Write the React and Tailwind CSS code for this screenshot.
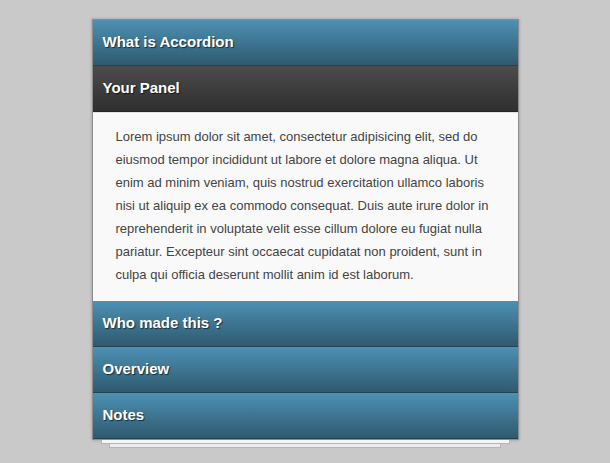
import React from "react";

function Header({ children, dark }) {
  return (
    <div
      className={
        "flex h-[46px] items-center px-[10px] text-[15px] font-bold text-white [text-shadow:1px_1px_1px_rgba(0,0,0,0.6)] border-b " +
        (dark
          ? "bg-gradient-to-b from-[#4c4c4c] to-[#2f2f2f] border-[#252525]"
          : "bg-gradient-to-b from-[#4d91b4] to-[#2f5a6f] border-[#234254]")
      }
    >
      {children}
    </div>
  );
}

export default function App() {
  return (
    <div className="min-h-[463px] bg-[#c9c9c9] pt-[19px] font-['Liberation_Sans',Arial,sans-serif]">
      <div className="mx-auto w-[427px] border border-[#8c8c8c] shadow-[0_0_3px_rgba(0,0,0,0.25)]">
        <Header>What is Accordion</Header>
        <Header dark>Your Panel</Header>
        <div className="border-t border-[#e2e2e2] bg-[#f9f9f9] pl-[23px] pr-[20px] pt-[12px] pb-[15px] text-[13px] leading-[23px] text-[#444]">
          Lorem ipsum dolor sit amet, consectetur adipisicing elit, sed do eiusmod tempor incididunt ut labore et dolore magna aliqua. Ut enim ad minim veniam, quis nostrud exercitation ullamco laboris nisi ut aliquip ex ea commodo consequat. Duis aute irure dolor in reprehenderit in voluptate velit esse cillum dolore eu fugiat nulla pariatur. Excepteur sint occaecat cupidatat non proident, sunt in culpa qui officia deserunt mollit anim id est laborum.
        </div>
        <Header>Who made this ?</Header>
        <Header>Overview</Header>
        <Header>Notes</Header>
      </div>
      <div className="mx-auto h-[4px] w-[409px] border border-t-0 border-[#b5b5b5] bg-[#f5f5f5]" />
      <div className="mx-auto h-[4px] w-[392px] border border-t-0 border-[#b5b5b5] bg-[#ececec]" />
    </div>
  );
}
